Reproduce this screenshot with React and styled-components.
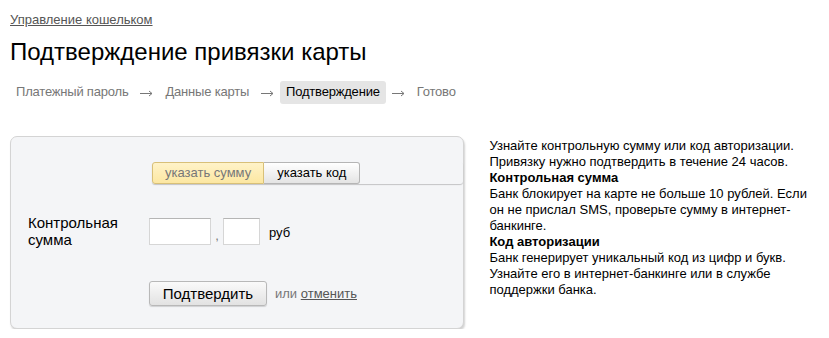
import React from "react";
import styled, { createGlobalStyle } from "styled-components";

const Global = createGlobalStyle`
  body {
    margin: 0;
    background: #fff;
    font-family: "Liberation Sans", Arial, sans-serif;
    color: #000;
  }
`;

const Page = styled.div`
  padding: 10px 10px 0 10px;
`;

const TopLink = styled.a`
  font-size: 13px;
  color: #555;
  text-decoration: underline;
  line-height: 16px;
`;

const Title = styled.h1`
  margin: 10px 0 0 0;
  font-size: 24px;
  font-weight: normal;
  line-height: 28px;
`;

const Steps = styled.div`
  display: flex;
  align-items: center;
  margin-top: 15px;
  font-size: 13px;
  letter-spacing: -0.2px;
  color: #777;
`;

const Step = styled.span`
  padding: 4px 6px 5px;
  border-radius: 3px;
  line-height: 14px;
  background: ${(p) => (p.$active ? "#e5e5e5" : "transparent")};
  color: ${(p) => (p.$active ? "#000" : "#777")};
`;

const ArrowIcon = styled.svg`
  display: block;
  margin: 1px 6px 0;
`;

const Arrow = () => (
  <ArrowIcon width="13" height="7" viewBox="0 0 13 7">
    <path
      d="M0 3.5H12M9 1L12 3.5L9 6"
      fill="none"
      stroke="#777"
      strokeWidth="1"
    />
  </ArrowIcon>
);

const Main = styled.div`
  display: flex;
  align-items: flex-start;
  margin-top: 32px;
`;

const Panel = styled.div`
  width: 455px;
  height: 193px;
  box-sizing: border-box;
  background: #f4f5f7;
  border: 1px solid #d4d4d4;
  border-radius: 7px;
  box-shadow: 1px 2px 2px rgba(0, 0, 0, 0.18);
  padding: 25px 0 0 17px;
`;

const Row = styled.div`
  display: grid;
  grid-template-columns: 122px auto;
  align-items: center;
  margin-bottom: ${(p) => p.$mb || 0}px;
`;

const Switch = styled.div`
  display: flex;
  margin-left: 2px;
  border-radius: 3px;
  box-shadow: 0 1px 1px rgba(0, 0, 0, 0.2);
`;

const SwitchBtn = styled.div`
  height: 22px;
  box-sizing: border-box;
  padding: 0 ${(p) => (p.$on ? 12 : 13)}px;
  font-size: 13px;
  line-height: 20px;
  border: 1px solid ${(p) => (p.$on ? "#d8c078" : "#b5b5b5")};
  border-radius: ${(p) => (p.$first ? "3px 0 0 3px" : "0 3px 3px 0")};
  border-left-width: ${(p) => (p.$first ? 1 : 0)}px;
  color: ${(p) => (p.$on ? "#777" : "#000")};
  background: ${(p) =>
    p.$on
      ? "linear-gradient(#fff3c8, #fce7a2)"
      : "linear-gradient(#ffffff, #e4e4e4)"};
`;

const Label = styled.div`
  font-size: 15px;
  line-height: 17px;
  color: #000;
`;

const Fields = styled.div`
  display: flex;
  align-items: center;
  margin-left: -1px;
`;

const Input = styled.input`
  width: ${(p) => p.$w}px;
  height: 27px;
  box-sizing: border-box;
  border: 1px solid #d6d6d6;
  border-top-color: #b5b5b5;
  background: #fff;
  padding: 0 4px;
  outline: none;
`;

const Comma = styled.span`
  font-size: 13px;
  color: #777;
  width: 12px;
  text-align: center;
  padding-top: 8px;
`;

const Unit = styled.span`
  font-size: 13px;
  margin-left: 9px;
  padding-top: 2px;
`;

const Button = styled.button`
  width: 118px;
  height: 25px;
  font-family: "Liberation Sans", Arial, sans-serif;
  font-size: 15px;
  color: #000;
  border: 1px solid #b8b8b8;
  border-radius: 3px;
  background: linear-gradient(#fafafa, #e2e2e2);
  box-shadow: 0 1px 1px rgba(0, 0, 0, 0.15);
  padding: 0;
`;

const Or = styled.span`
  font-size: 13px;
  color: #777;
  margin-left: 8px;
`;

const Cancel = styled.a`
  color: #555;
  text-decoration: underline;
`;

const Help = styled.div`
  margin: 2px 0 0 25px;
  width: 330px;
  font-size: 13px;
  line-height: 16px;
  color: #000;
`;

const Strong = styled.div`
  font-weight: bold;
`;

export default function App() {
  return (
    <>
      <Global />
      <Page>
        <TopLink href="#">Управление кошельком</TopLink>
        <Title>Подтверждение привязки карты</Title>
        <Steps>
          <Step>Платежный пароль</Step>
          <Arrow />
          <Step>Данные карты</Step>
          <Arrow />
          <Step $active>Подтверждение</Step>
          <Arrow />
          <Step>Готово</Step>
        </Steps>
        <Main>
          <Panel>
            <Row $mb={30}>
              <span />
              <Switch>
                <SwitchBtn $on $first>указать сумму</SwitchBtn>
                <SwitchBtn>указать код</SwitchBtn>
              </Switch>
            </Row>
            <Row $mb={33}>
              <Label>
                Контрольная
                <br />
                сумма
              </Label>
              <Fields>
                <Input $w={62} />
                <Comma>,</Comma>
                <Input $w={37} />
                <Unit>руб</Unit>
              </Fields>
            </Row>
            <Row>
              <span />
              <Fields>
                <Button>Подтвердить</Button>
                <Or>
                  или <Cancel href="#">отменить</Cancel>
                </Or>
              </Fields>
            </Row>
          </Panel>
          <Help>
            Узнайте контрольную сумму или код авторизации. Привязку нужно
            подтвердить в течение 24 часов.
            <Strong>Контрольная сумма</Strong>
            Банк блокирует на карте не больше 10 рублей. Если он не прислал
            SMS, проверьте сумму в интернет-банкинге.
            <Strong>Код авторизации</Strong>
            Банк генерирует уникальный код из цифр и букв. Узнайте его в
            интернет-банкинге или в службе поддержки банка.
          </Help>
        </Main>
      </Page>
    </>
  );
}
